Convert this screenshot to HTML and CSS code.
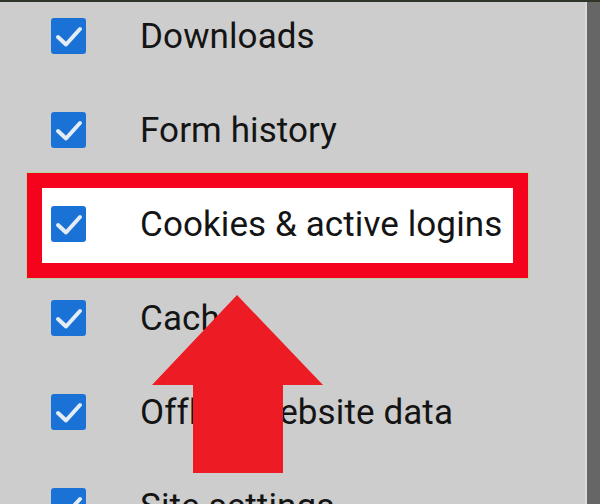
FILE: index.html
```html
<!DOCTYPE html>
<html>
<head>
<meta charset="utf-8">
<link rel="stylesheet" href="styles.css">
</head>
<body>
<div class="topbar"></div>
<div class="screen">
  <div class="panel">
    <ul class="list">
      <li class="row"><span class="box"><svg viewBox="0 0 35 36"><path d="M7 19 L15 26.5 L29 11"/></svg></span><span class="label">Downloads</span></li>
      <li class="row"><span class="box"><svg viewBox="0 0 35 36"><path d="M7 19 L15 26.5 L29 11"/></svg></span><span class="label">Form history</span></li>
      <li class="row marked"><span class="box"><svg viewBox="0 0 35 36"><path d="M7 19 L15 26.5 L29 11"/></svg></span><span class="label">Cookies &amp; active logins</span></li>
      <li class="row"><span class="box"><svg viewBox="0 0 35 36"><path d="M7 19 L15 26.5 L29 11"/></svg></span><span class="label">Cache</span></li>
      <li class="row"><span class="box"><svg viewBox="0 0 35 36"><path d="M7 19 L15 26.5 L29 11"/></svg></span><span class="label">Offline website data</span></li>
      <li class="row"><span class="box"><svg viewBox="0 0 35 36"><path d="M7 19 L15 26.5 L29 11"/></svg></span><span class="label">Site settings</span></li>
    </ul>
  </div>
  <div class="edge"></div>
</div>
<svg class="arrow" viewBox="0 0 600 504"><polygon points="237,295 323,385 283,385 283,473 193,473 193,385 152,385"/></svg>
</body>
</html>
```
FILE: styles.css
```css
html, body {
  margin: 0;
  padding: 0;
  width: 600px;
  height: 504px;
  overflow: hidden;
  background: #cdcdcd;
  font-family: Roboto, "Noto Sans", sans-serif;
}
.topbar {
  height: 2px;
  background: #2f3528;
}
.screen {
  display: flex;
  height: 502px;
}
.panel {
  flex: 1;
  overflow: hidden;
}
.edge {
  width: 13px;
  background: #666666;
  border-left: 2px solid #dadada;
}
.list {
  list-style: none;
  margin: -13px 0 0 0;
  padding: 0;
}
.row {
  position: relative;
  height: 94px;
  display: flex;
  align-items: center;
}
.box {
  position: relative;
  z-index: 1;
  width: 35px;
  height: 36px;
  margin-left: 51px;
  border-radius: 3px;
  background: #1b72d6;
  display: flex;
}
.box svg {
  width: 35px;
  height: 36px;
  fill: none;
  stroke: #e4ecf5;
  stroke-width: 4;
  stroke-linecap: round;
  stroke-linejoin: round;
}
.label {
  position: relative;
  z-index: 1;
  margin-left: 54px;
  font-size: 35px;
  letter-spacing: 0.1px;
  color: #141414;
  white-space: nowrap;
  line-height: 1;
}
.marked::before {
  content: "";
  position: absolute;
  left: 27px;
  top: -4px;
  width: 501px;
  height: 105px;
  box-sizing: border-box;
  border: 15px solid #f5021c;
  background: #ffffff;
  outline: 1px solid #b9d39a;
  z-index: 0;
}
.arrow {
  position: absolute;
  left: 0;
  top: 0;
  z-index: 5;
  width: 600px;
  height: 504px;
}
.arrow polygon {
  fill: #ed1c24;
}
```
